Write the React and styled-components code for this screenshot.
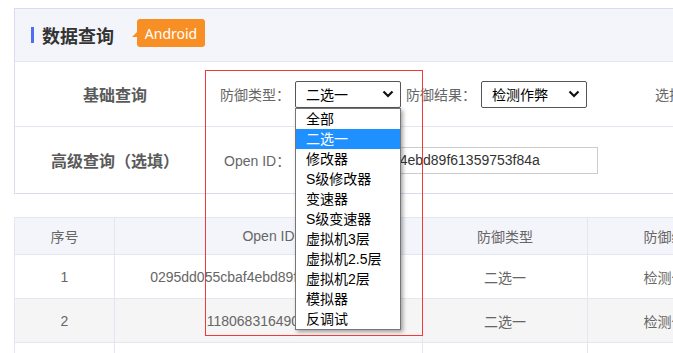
import React from "react";
import styled, { createGlobalStyle } from "styled-components";

const GlobalStyle = createGlobalStyle`
  html, body {
    margin: 0;
    padding: 0;
    overflow: hidden;
    background: #fff;
  }
  body {
    font-family: "Liberation Sans", "Noto Sans CJK SC", sans-serif;
    color: #333;
  }
`;

const Page = styled.div`
  position: relative;
  width: 780px;
  padding: 8px 0 0 14px;
`;

const Panel = styled.div`
  border: 1px solid #d8dcee;
  background: #fff;
`;

const PanelHeader = styled.div`
  display: flex;
  align-items: center;
  height: 52px;
  padding-left: 16px;
  background: #f4f5fa;
`;

const TitleBar = styled.span`
  width: 3px;
  height: 16px;
  background: #4c6ef5;
  margin-right: 8px;
`;

const Title = styled.h2`
  margin: 0;
  font-size: 18px;
  font-weight: 700;
  color: #333;
  font-family: "Noto Sans CJK SC", sans-serif;
`;

const Badge = styled.span`
  position: relative;
  display: inline-flex;
  align-items: center;
  justify-content: center;
  margin-left: 23px;
  height: 28px;
  width: 68px;
  margin-top: -4px;
  background: #f88f25;
  border-radius: 3px;
  color: #fff;
  font-size: 14px;
  font-family: "Noto Sans", sans-serif;

  &::before {
    content: "";
    position: absolute;
    left: -5px;
    top: 13px;
    border-style: solid;
    border-width: 5px 5px 0 0;
    border-color: transparent #f88f25 transparent transparent;
  }
`;

const FormRow = styled.div`
  display: flex;
  align-items: center;
  height: ${(p) => p.h}px;
  border-top: 1px solid #e4e7f2;
`;

const RowLabel = styled.div`
  width: ${(p) => p.w}px;
  text-align: center;
  font-size: 16px;
  font-weight: 600;
  color: #5a5a5a;
  font-family: "Noto Sans CJK SC", sans-serif;
`;

const Fields = styled.div`
  display: flex;
  align-items: center;
  padding-left: ${(p) => p.pl}px;
`;

const FieldLabel = styled.span`
  font-size: 14px;
  color: #666;
  margin-right: 5px;
  margin-left: ${(p) => p.ml || 0}px;
  white-space: nowrap;
`;

const SelectWrap = styled.div`
  position: relative;
  margin-right: ${(p) => p.mr || 0}px;
`;

const SelectBox = styled.div`
  box-sizing: border-box;
  display: flex;
  align-items: center;
  justify-content: space-between;
  width: 106px;
  height: 27px;
  padding: 0 6px 0 10px;
  border: 1px solid #555;
  border-radius: 2px;
  background: #fff;
  font-size: 14px;
  color: #000;
  font-family: "Noto Sans CJK SC", sans-serif;
`;

const OptionList = styled.ul`
  position: absolute;
  z-index: 5;
  left: 0;
  top: 100%;
  box-sizing: border-box;
  width: 106px;
  margin: 0;
  padding: 0;
  list-style: none;
  background: #fff;
  border: 1px solid #767676;
  box-shadow: 2px 2px 4px rgba(0, 0, 0, 0.35);
`;

const Option = styled.li`
  height: 20px;
  line-height: 20px;
  padding-left: 10px;
  font-size: 14px;
  color: ${(p) => (p.active ? "#fff" : "#000")};
  background: ${(p) => (p.active ? "#1e90ff" : "transparent")};
  white-space: nowrap;
`;

const TextInput = styled.div`
  box-sizing: border-box;
  width: 303px;
  height: 27px;
  padding: 0 7px;
  border: 1px solid #ccc;
  font-size: 14px;
  line-height: 25px;
  color: #333;
`;

const Table = styled.div`
  margin-top: 23px;
  border-left: 1px solid #e4e7f2;
`;

const TRow = styled.div`
  display: grid;
  grid-template-columns: 100px 308px 165px 168px;
  height: ${(p) => p.h}px;
  background: ${(p) => p.bg};
  border-top: 1px solid #e4e7f2;
`;

const Cell = styled.div`
  display: flex;
  align-items: center;
  justify-content: center;
  border-right: 1px solid #e4e7f2;
  font-size: 14px;
  color: #666;
  white-space: nowrap;
  overflow: hidden;
`;

const Annotation = styled.div`
  position: absolute;
  z-index: 10;
  left: 205px;
  top: 70px;
  width: 216px;
  height: 264px;
  border: 1px solid #f03a3a;
  pointer-events: none;
`;

const Chevron = () => (
  <svg width="12" height="8" viewBox="0 0 12 8">
    <path d="M1.5 1.5 L6 6 L10.5 1.5" fill="none" stroke="#111" strokeWidth="2.2" />
  </svg>
);

const options = [
  "全部",
  "二选一",
  "修改器",
  "S级修改器",
  "变速器",
  "S级变速器",
  "虚拟机3层",
  "虚拟机2.5层",
  "虚拟机2层",
  "模拟器",
  "反调试",
];

const rows = [
  { no: 1, id: "0295dd055cbaf4ebd89f61359753f84a", bg: "#fff", h: 43 },
  { no: 2, id: "1180683164906532", bg: "#f5f5f5", h: 43 },
];

export default function App() {
  return (
    <>
      <GlobalStyle />
      <Page>
        <Panel>
          <PanelHeader>
            <TitleBar />
            <Title>数据查询</Title>
            <Badge>Android</Badge>
          </PanelHeader>
          <FormRow h={64}>
            <RowLabel w={200}>基础查询</RowLabel>
            <Fields pl={5}>
              <FieldLabel>防御类型：</FieldLabel>
              <SelectWrap mr={5}>
                <SelectBox>
                  二选一
                  <Chevron />
                </SelectBox>
                <OptionList>
                  {options.map((o) => (
                    <Option key={o} active={o === "二选一"}>
                      {o}
                    </Option>
                  ))}
                </OptionList>
              </SelectWrap>
              <FieldLabel>防御结果：</FieldLabel>
              <SelectWrap>
                <SelectBox>
                  检测作弊
                  <Chevron />
                </SelectBox>
              </SelectWrap>
              <FieldLabel ml={68}>选择日期：</FieldLabel>
            </Fields>
          </FormRow>
          <FormRow h={66}>
            <RowLabel w={200}>高级查询（选填）</RowLabel>
            <Fields pl={9}>
              <FieldLabel>Open ID：</FieldLabel>
              <TextInput>0295dd055cbaf4ebd89f61359753f84a</TextInput>
            </Fields>
          </FormRow>
        </Panel>
        <Table>
          <TRow h={36} bg="#f4f5fa">
            <Cell>序号</Cell>
            <Cell>Open ID</Cell>
            <Cell>防御类型</Cell>
            <Cell>防御结果</Cell>
          </TRow>
          {rows.map((r) => (
            <TRow key={r.no} h={r.h} bg={r.bg}>
              <Cell>{r.no}</Cell>
              <Cell>{r.id}</Cell>
              <Cell>二选一</Cell>
              <Cell>检测作弊</Cell>
            </TRow>
          ))}
          <TRow h={40} bg="#fff">
            <Cell />
            <Cell />
            <Cell />
            <Cell />
          </TRow>
        </Table>
        <Annotation />
      </Page>
    </>
  );
}
